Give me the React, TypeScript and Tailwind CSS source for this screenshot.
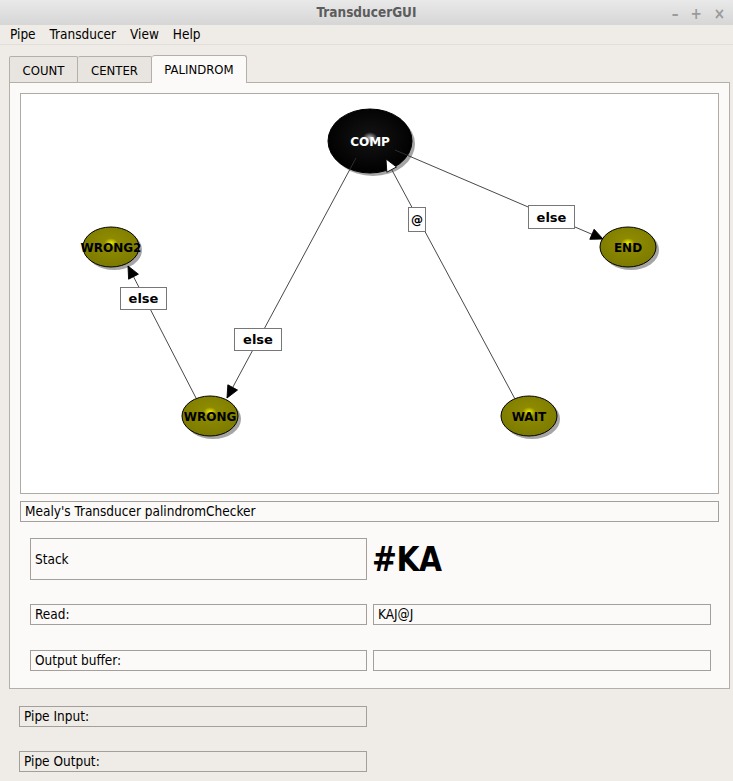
import React from 'react';

const ui = { fontFamily: '"DejaVu Sans Condensed", "DejaVu Sans", sans-serif' };
const dv = '"DejaVu Sans", "Liberation Sans", sans-serif';

type Node = { id: string; x: number; y: number; rx: number; ry: number; dark?: boolean };

const nodes: Node[] = [
  { id: 'COMP', x: 370, y: 141, rx: 42, ry: 32, dark: true },
  { id: 'WRONG2', x: 111, y: 247, rx: 28, ry: 20 },
  { id: 'END', x: 628, y: 247, rx: 28, ry: 20 },
  { id: 'WRONG', x: 210, y: 416, rx: 28, ry: 20 },
  { id: 'WAIT', x: 529, y: 416, rx: 28, ry: 20 },
];

type Edge = { x1: number; y1: number; x2: number; y2: number; hollow?: boolean; label: string; lx: number; ly: number; lw: number; lh: number };

const edges: Edge[] = [
  { x1: 196, y1: 398, x2: 128, y2: 266, label: 'else', lx: 120, ly: 287, lw: 46, lh: 22 },
  { x1: 356, y1: 158, x2: 227, y2: 398, label: 'else', lx: 234, ly: 328, lw: 47, lh: 22 },
  { x1: 515, y1: 399, x2: 386, y2: 159, hollow: true, label: '@', lx: 408, ly: 207, lw: 17, lh: 24 },
  { x1: 395, y1: 150, x2: 603, y2: 239, label: 'else', lx: 528, ly: 205, lw: 46, lh: 23 },
];

function Arrow({ e }: { e: Edge }) {
  const dx = e.x2 - e.x1;
  const dy = e.y2 - e.y1;
  const len = Math.sqrt(dx * dx + dy * dy);
  const ux = dx / len;
  const uy = dy / len;
  const bx = e.x2 - ux * 12;
  const by = e.y2 - uy * 12;
  const px = -uy * 5.5;
  const py = ux * 5.5;
  const pts = `${e.x2},${e.y2} ${bx + px},${by + py} ${bx - px},${by - py}`;
  return (
    <g>
      <line x1={e.x1} y1={e.y1} x2={e.x2} y2={e.y2} stroke="#333" strokeWidth={0.9} />
      <polygon points={pts} fill={e.hollow ? '#fff' : '#000'} stroke="#000" strokeWidth={0.9} />
      <rect x={e.lx + 0.5} y={e.ly + 0.5} width={e.lw} height={e.lh} fill="#fff" stroke="#777" strokeWidth={1} />
      <text
        x={e.lx + e.lw / 2 + 0.5}
        y={e.ly + e.lh / 2 + 5}
        textAnchor="middle"
        fontFamily={dv}
        fontWeight="bold"
        fontSize={e.label === '@' ? 12 : 13}
        fill="#000"
      >
        {e.label}
      </text>
    </g>
  );
}

function Graph() {
  return (
    <svg width={697} height={399} viewBox="21 94 697 399" className="block">
      <defs>
        <radialGradient id="olive" cx="0.5" cy="0.4" r="0.6">
          <stop offset="0" stopColor="#f0f000" />
          <stop offset="0.2" stopColor="#8e8a00" />
          <stop offset="1" stopColor="#7c7a00" />
        </radialGradient>
        <radialGradient id="black" cx="0.5" cy="0.45" r="0.55">
          <stop offset="0" stopColor="#bdbdbd" />
          <stop offset="0.16" stopColor="#111" />
          <stop offset="1" stopColor="#000" />
        </radialGradient>
      </defs>
      {nodes.map((n) => (
        <g key={n.id}>
          <ellipse cx={n.x + 3} cy={n.y + 3} rx={n.rx} ry={n.ry} fill="#a5a5a5" />
          <ellipse
            cx={n.x}
            cy={n.y}
            rx={n.rx}
            ry={n.ry}
            fill={n.dark ? 'url(#black)' : 'url(#olive)'}
            stroke="#000"
            strokeWidth={1}
          />
          <text
            x={n.x}
            y={n.y + 4.5}
            textAnchor="middle"
            fontFamily={dv}
            fontWeight="bold"
            fontSize={12}
            fill={n.dark ? '#fff' : '#000'}
          >
            {n.id}
          </text>
        </g>
      ))}
      {edges.map((e, i) => (
        <Arrow key={i} e={e} />
      ))}
    </svg>
  );
}

function Field({ children, className = '' }: { children?: React.ReactNode; className?: string }) {
  return (
    <div className={`h-[21px] border border-[#a3a09b] flex items-center px-[4px] text-[13.5px] text-black leading-none ${className}`}>
      {children}
    </div>
  );
}

export default function App() {
  return (
    <div className="w-[733px] h-[781px] bg-[#efebe7] flex flex-col overflow-hidden" style={ui}>
      {/* title bar */}
      <div className="h-[25px] bg-gradient-to-b from-[#e9e9e9] to-[#d6d6d6] flex items-center relative">
        <div className="flex-1 text-center text-[13.5px] font-bold text-[#5c5c5c]">TransducerGUI</div>
        <div className="absolute right-[8px] top-[3px] flex gap-[12px] text-[15px] text-[#9a9a9a] font-bold">
          <span>–</span>
          <span>+</span>
          <span>×</span>
        </div>
      </div>

      {/* menu */}
      <div className="h-[20px] flex items-center gap-[14px] px-[10px] text-[13.5px] text-black border-b border-[#e2ded9]">
        <span>Pipe</span>
        <span>Transducer</span>
        <span>View</span>
        <span>Help</span>
      </div>

      {/* tabs */}
      <div className="flex items-end px-[9px] mt-[9px] h-[28px] text-[13px] text-black">
        <div className="w-[69px] h-[26px] border border-[#b3afa9] border-b-0 bg-[#e8e4df] rounded-t-[2px] flex items-center justify-center pt-[2px]">COUNT</div>
        <div className="w-[74px] h-[26px] border border-[#b3afa9] border-b-0 border-l-0 bg-[#e8e4df] rounded-t-[2px] flex items-center justify-center pt-[2px]">CENTER</div>
        <div className="w-[95px] h-[28px] border border-[#b3afa9] border-b-0 border-l-0 bg-[#fcfaf8] rounded-t-[3px] flex items-center justify-center relative top-[1px] z-10">PALINDROM</div>
      </div>

      {/* panel */}
      <div className="ml-[9px] w-[721px] h-[607px] border border-[#b3afa9] bg-[#fcfaf8] flex flex-col px-[10px] pt-[10px]">
        <div className="w-[699px] h-[401px] border border-[#aeaba6] bg-white">
          <Graph />
        </div>
        <Field className="mt-[7px] w-[699px] h-[20px]">Mealy's Transducer palindromChecker</Field>
        <div className="flex items-center mt-[16px] ml-[10px]">
          <div className="w-[337px] h-[42px] border border-[#a3a09b] flex items-center px-[4px] text-[13.5px]">Stack</div>
          <div className="ml-[5px] text-[33px] font-bold leading-none tracking-[-0.5px]">#KA</div>
        </div>
        <div className="flex mt-[24px] ml-[10px] gap-[6px]">
          <Field className="w-[337px]">Read:</Field>
          <Field className="w-[338px]">KAJ@J</Field>
        </div>
        <div className="flex mt-[25px] ml-[10px] gap-[6px]">
          <Field className="w-[337px]">Output buffer:</Field>
          <Field className="w-[338px]" />
        </div>
      </div>

      <div className="ml-[19px] mt-[17px] flex flex-col gap-[24px]">
        <Field className="w-[348px]">Pipe Input:</Field>
        <Field className="w-[348px]">Pipe Output:</Field>
      </div>
    </div>
  );
}
